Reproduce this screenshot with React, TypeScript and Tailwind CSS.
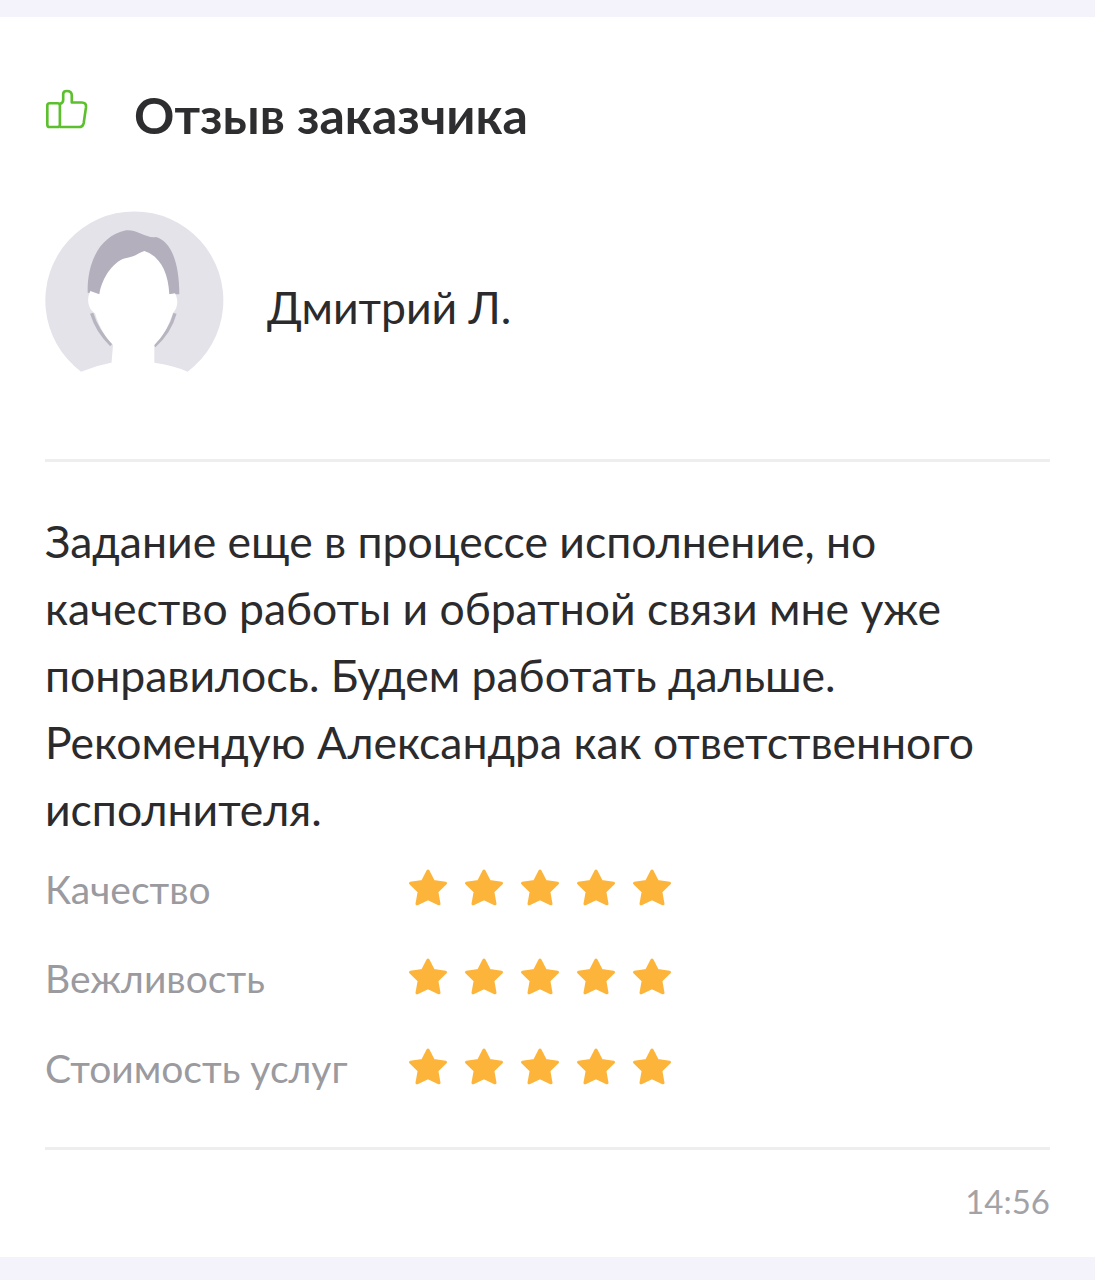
const Star = () => (
  <svg width="40" height="40" viewBox="0 0 40 40" className="block">
    <path
      d="M20 3 L25.4 13.4 L37.5 15.2 L28.8 23.6 L31 35.8 L20 30.6 L9 35.8 L11.2 23.6 L2.5 15.2 L14.6 13.4 Z"
      fill="#fdb43a"
      stroke="#fdb43a"
      strokeWidth="3"
      strokeLinejoin="round"
    />
  </svg>
);

const Stars = () => (
  <div className="mt-[2px] flex gap-4">
    <Star />
    <Star />
    <Star />
    <Star />
    <Star />
  </div>
);

const Rating = ({ label, className }: { label: string; className: string }) => (
  <div className={`flex items-start ${className}`}>
    <div className="w-[363px] pt-[1px] text-[39px] leading-[44px] text-[#9a9a9f]">{label}</div>
    <Stars />
  </div>
);

const Avatar = () => (
  <svg width="178" height="160" viewBox="42 38 534 480" className="block shrink-0 overflow-visible">
    <path
      d="M470 517 A267 267 0 1 0 150 517 Q195 498 240 490 L370 490 Q425 497 470 517 Z"
      fill="#e4e3ea"
    />
    <path
      d="M170 280 C168 190 205 110 285 93 C320 90 345 118 375 113 C420 125 445 190 445 285 L405 285 L200 285 Z"
      fill="#b3afbd"
    />
    <path d="M182 342 C195 385 215 412 241 437" stroke="#b8b5c0" strokeWidth="10" fill="none" />
    <path d="M432 342 C420 385 398 415 370 440" stroke="#b8b5c0" strokeWidth="10" fill="none" />
    <path
      d="M205 285 C212 235 250 180 290 175 C310 172 325 160 340 155 C385 170 412 215 415 285 L432 282 C442 300 442 325 425 342 C412 385 395 412 370 437 L370 510 L240 510 L246 437 C222 412 205 385 192 342 C172 330 165 300 178 275 Z"
      fill="#ffffff"
    />
  </svg>
);

const ThumbIcon = () => (
  <svg width="43" height="42" viewBox="45 55 130 125" fill="none" className="block">
    <rect x="52" y="100" width="38" height="72" rx="7" stroke="#5cc02e" strokeWidth="8" />
    <path
      d="M90 102 C97 100 100 97 100 90 L100 72 C100 66 105 63 111 63 C120 63 126 68 126 77 L126 98 L156 98 C166 98 170 103 169 112 L162 160 C160 168 156 172 148 172 L90 172"
      stroke="#5cc02e"
      strokeWidth="8"
      strokeLinejoin="round"
    />
  </svg>
);

export default function App() {
  return (
    <div
      className="flex h-[1280px] w-[1095px] flex-col bg-[#f4f3fb] pb-[23px] pt-[17px] text-[#2b2b2d]"
      style={{ fontFamily: '"Lato", "Noto Sans", sans-serif' }}
    >
      <div className="flex flex-1 flex-col bg-white pl-[45px] pr-[45px]">
        <div className="flex items-start pt-[69px]">
          <div className="mt-[2px] w-[89px]">
            <ThumbIcon />
          </div>
          <h1 className="text-[50px] font-bold leading-[58px] text-[#2e2e30]">Отзыв заказчика</h1>
        </div>

        <div className="mt-[68px] flex items-start">
          <Avatar />
          <div className="ml-[44px] mt-[68px] text-[44.5px] leading-[54px]">Дмитрий Л.</div>
        </div>

        <div className="mt-[87px] h-[3px] bg-[#eeeef0]" />

        <p className="mt-[45px] text-[44.5px] leading-[67px] text-[#2b2b2d]">
          Задание еще в процессе исполнение, но
          <br />
          качество работы и обратной связи мне уже
          <br />
          понравилось. Будем работать дальше.
          <br />
          Рекомендую Александра как ответственного
          <br />
          исполнителя.
        </p>

        <Rating label="Качество" className="mt-[24px]" />
        <Rating label="Вежливость" className="mt-[44px]" />
        <Rating label="Стоимость услуг" className="mt-[45px]" />

        <div className="mt-[57px] h-[3px] bg-[#eeeef0]" />

        <div className="mt-[29px] text-right text-[33px] leading-[44px] text-[#a3a3a7]">14:56</div>
      </div>
    </div>
  );
}
